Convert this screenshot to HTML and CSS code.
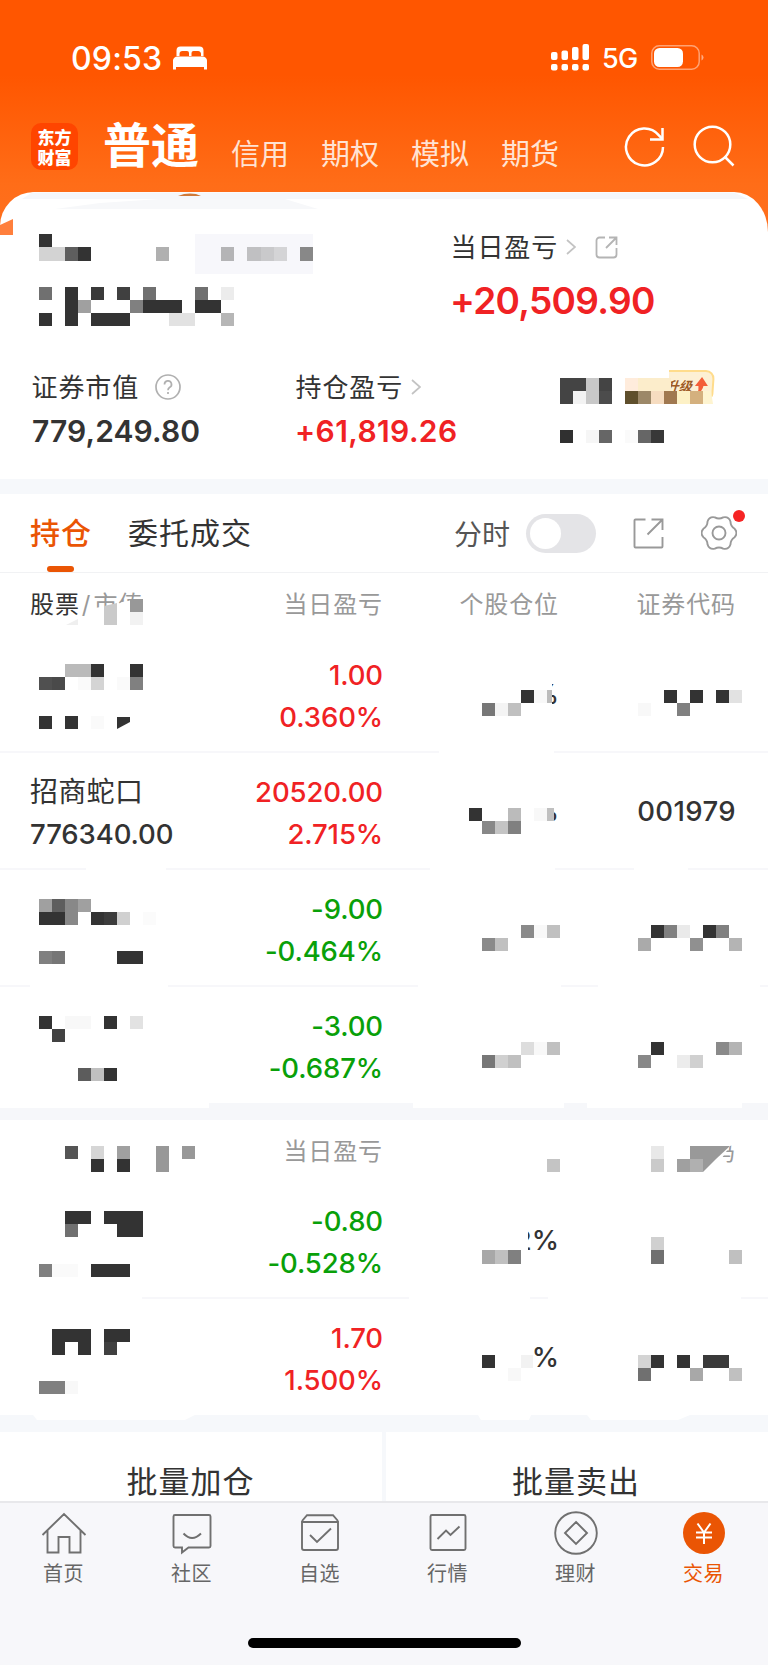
FILE: index.html
```html
<!DOCTYPE html>
<html lang="zh-CN">
<head>
<meta charset="utf-8">
<title>交易</title>
<link rel="stylesheet" href="styles.css">
</head>
<body>
<div class="screen">
  <div class="status">
    <div class="status-left"><span class="time">09:53</span>
      <svg class="bed" width="34" height="24" viewBox="0 0 34 24" fill="#fff"><path d="M3.500 10V4.500a4 4 0 0 1 4-4h19a4 4 0 0 1 4 4V10h-2.500V8.500a3 3 0 0 0-3-3.500h-4.500a2 2 0 0 0-2 2v3h-2.500V7a2 2 0 0 0-2-2H9.500a3 3 0 0 0-3 3v2z"/><path d="M0 23.500V14.500a4.500 4 0 0 1 4.500-4h25a4.500 4 0 0 1 4.500 4v9h-3V21H3v2.500z"/></svg>
    </div>
    <div class="status-right">
      <svg width="39" height="28" viewBox="0 0 39 28" fill="#fff"><rect x="0" y="8" width="6.500" height="8" rx="2"/><rect x="10.500" y="6.500" width="6.500" height="9.500" rx="2"/><rect x="21" y="3" width="6.500" height="13" rx="2"/><rect x="31.500" y="0" width="6.500" height="16" rx="2"/><rect x="0" y="20" width="6.500" height="6.500" rx="2"/><rect x="10.500" y="20" width="6.500" height="6.500" rx="2"/><rect x="21" y="20" width="6.500" height="6.500" rx="2"/><rect x="31.500" y="20" width="6.500" height="6.500" rx="2"/></svg>
      <span class="net">5G</span>
      <svg class="battery" width="54" height="26" viewBox="0 0 54 26"><rect x=".8" y=".8" width="47.400" height="23.400" rx="7.500" fill="none" stroke="#fff" stroke-opacity=".45" stroke-width="1.500"/><rect x="3" y="3" width="29" height="19" rx="5.500" fill="#fff"/><path d="M50.500 9.500q2 1 2 3t-2 3z" fill="#fff" fill-opacity=".5"/></svg>
    </div>
  </div>

  <header class="nav">
    <div class="logo">东方<br>财富</div>
    <b class="nav-main">普通</b>
    <nav class="nav-tabs"><span>信用</span><span>期权</span><span>模拟</span><span>期货</span></nav>
    <div class="nav-icons">
      <svg width="42" height="44" viewBox="0 0 42 44" fill="none" stroke="#fff" stroke-width="2.500"><path d="M39 22a18.500 18.500 0 1 1-4.300-11.900l3.300 3.500"/><path d="M38.500 3v11.500H26"/></svg>
      <svg width="42" height="44" viewBox="0 0 42 44" fill="none" stroke="#fff" stroke-width="2.500"><circle cx="19.500" cy="19.500" r="17.800"/><path d="M31.500 31.500l9 9"/></svg>
    </div>
  </header>

  <section class="summary">
    <div class="summary-top">
      <div class="metric">
        <div class="label"><span>当日盈亏</span>
          <svg class="chev" width="10" height="16" viewBox="0 0 10 16" fill="none" stroke="#c3c3c3" stroke-width="1.700"><path d="M1 1l8 7-8 7"/></svg>
          <svg class="share" width="23" height="23" viewBox="0 0 23 23" fill="none" stroke="#b4b4b4" stroke-width="1.800"><path d="M10 1.500H4.500a3 3 0 0 0-3 3v14a3 3 0 0 0 3 3h14a3 3 0 0 0 3-3V12M14 1.500h7.500V9M21.500 1.500L11 12"/></svg>
        </div>
        <div class="value big red">+20,509.90</div>
      </div>
    </div>
    <div class="summary-bottom">
      <div class="metric">
        <div class="label"><span>证券市值</span>
          <svg class="help" width="26" height="26" viewBox="0 0 26 26" fill="none" stroke="#b0b0b0" stroke-width="1.700"><circle cx="13" cy="13" r="12"/><path d="M9.500 10.500a3.500 3.500 0 1 1 5 3c-1 .7-1.500 1.200-1.500 2.700M13 18v2"/></svg>
        </div>
        <div class="value">779,249.80</div>
      </div>
      <div class="metric">
        <div class="label"><span>持仓盈亏</span>
          <svg class="chev" width="10" height="16" viewBox="0 0 10 16" fill="none" stroke="#c3c3c3" stroke-width="1.700"><path d="M1 1l8 7-8 7"/></svg>
        </div>
        <div class="value red gain">+61,819.26</div>
      </div>
      <div class="badge"><span>升级</span>
        <svg width="14" height="17" viewBox="0 0 14 17"><path d="M7.500 0L14 9H9.500Q9 14 3.500 17 5.500 13 4.500 9H1z" fill="#f45e38"/></svg>
      </div>
    </div>
  </section>

  <section class="toolbar">
    <div class="tab active">持仓</div>
    <div class="tab">委托成交</div>
    <div class="tools">
      <span class="minute">分时</span>
      <span class="switch"></span>
      <svg class="open" width="31" height="31" viewBox="0 0 31 31" fill="none" stroke="#999" stroke-width="1.900"><path d="M12.500 1.500h-10a1 1 0 0 0-1 1v26a1 1 0 0 0 1 1h26a1 1 0 0 0 1-1V19M18.500 1.500h11V12M29.500 1.500L14.500 16.500"/></svg>
      <span class="gear">
        <svg width="36" height="36" viewBox="0 0 36 36" fill="none" stroke="#999" stroke-width="1.900" stroke-linejoin="round"><circle cx="18" cy="18" r="6.500"/><path d="M33.650 13.810Q37.350 18 33.650 22.190Q29.560 24.680 29.460 29.460Q27.680 34.760 22.190 33.650Q18 31.350 13.810 33.650Q8.320 34.760 6.540 29.460Q6.440 24.680 2.350 22.190Q-1.350 18 2.350 13.810Q6.440 11.320 6.540 6.540Q8.320 1.240 13.810 2.350Q18 4.650 22.190 2.350Q27.680 1.240 29.460 6.540Q29.560 11.320 33.650 13.810Z"/></svg>
        <i class="dot"></i>
      </span>
    </div>
  </section>

  <section class="table">
    <div class="row head"><div class="name"><span class="dark">股票</span><span class="slash">/</span>市值</div><div>当日盈亏</div><div>个股仓位</div><div>证券代码</div></div>
    <div class="row"><div class="name"></div><div class="pair red">1.00<br>0.360%</div><div class="plain">%</div><div></div></div>
    <div class="row"><div class="name pair"><span class="stock">招商蛇口</span><br>776340.00</div><div class="pair red">20520.00<br>2.715%</div><div class="plain">%</div><div class="plain code">001979</div></div>
    <div class="row"><div class="name"></div><div class="pair green">-9.00<br>-0.464%</div><div></div><div></div></div>
    <div class="row last"><div class="name"></div><div class="pair green">-3.00<br>-0.687%</div><div></div><div></div></div>
  </section>

  <section class="table second">
    <div class="row head"><div class="name"></div><div>当日盈亏</div><div></div><div>码</div></div>
    <div class="row"><div class="name"></div><div class="pair green">-0.80<br>-0.528%</div><div class="plain">2%</div><div></div></div>
    <div class="row last"><div class="name"></div><div class="pair red">1.70<br>1.500%</div><div class="plain">%</div><div></div></div>
  </section>

  <section class="actions"><div>批量加仓</div><div>批量卖出</div></section>

  <footer class="tabbar">
    <div class="items">
      <div class="item"><svg width="46" height="46" viewBox="0 0 46 46"><path d="M1.500 24L23 3l21.500 21M6.500 19.500V41.500H17.500V26H28.500V41.500H39.500V19.500"/></svg>首页</div>
      <div class="item"><svg width="46" height="46" viewBox="0 0 46 46"><path d="M6 4H40a1.500 1.500 0 0 1 1.500 1.500V35a1.500 1.500 0 0 1-1.500 1.500H19.500L13 41.500V36.500H6A1.500 1.500 0 0 1 4.500 35V5.500A1.500 1.500 0 0 1 6 4zM14.500 22.500q8.500 9 17.500 0"/></svg>社区</div>
      <div class="item"><svg width="46" height="46" viewBox="0 0 46 46"><path d="M5 10L10 4.200H36L41 10M5 10V37a2 2 0 0 0 2 2H39a2 2 0 0 0 2-2V10M5 11H41M13 24l7 7L34 17.500"/></svg>自选</div>
      <div class="item"><svg width="46" height="46" viewBox="0 0 46 46"><rect x="5.500" y="4" width="35" height="35" rx="1.500"/><path d="M12.500 28l8.500-8.500 4.500 4.500 9-8.500"/></svg>行情</div>
      <div class="item"><svg width="46" height="46" viewBox="0 0 46 46"><circle cx="23" cy="22" r="20.800"/><path d="M23 11L34 22 23 33 12 22z"/></svg>理财</div>
      <div class="item on"><svg width="46" height="46" viewBox="0 0 46 46"><circle class="disc" cx="23" cy="22" r="21"/><path class="yen" d="M16.500 12.500l6.500 9 6.500-9M15 21.500H31M15 26.500H31M23 21.500V33"/></svg>交易</div>
    </div>
    <div class="home"></div>
  </footer>

  <svg class="mosaic" id="mosaic" width="768" height="1665" viewBox="0 0 768 1665" aria-hidden="true"></svg>
</div>
<script src="mosaic.js"></script>
</body>
</html>
```
FILE: styles.css
```css
* { box-sizing: border-box; }
body { margin: 0; font-family: Inter, "Noto Sans CJK SC", sans-serif; color: #333; background: #fff; }
svg { display: block; flex: none; }
.screen { position: relative; width: 768px; height: 1665px; overflow: hidden; background: linear-gradient(#ff5600 0, #ff5600 75px, #ff6d18 185px, #ff7020 240px); display: flex; flex-direction: column; }
.mosaic { position: absolute; left: 0; top: 0; pointer-events: none; }
.red { color: #f02224; }
.green { color: #09a009; }

.status { height: 112px; padding: 38px 63px 0 71px; display: flex; justify-content: space-between; color: #fff; }
.status-left, .status-right { display: flex; height: 40px; align-items: center; }
.time { font-size: 32px; font-weight: 550; letter-spacing: 0.2px; width: 102px; }
.net { font-size: 27px; font-weight: 500; width: 61px; padding-left: 12px; letter-spacing: -0.8px; }

.nav { height: 80px; padding-left: 31px; display: flex; align-items: flex-start; color: #fff; }
.logo { width: 47px; height: 47px; margin-top: 11px; border-radius: 10px; background: #ff4500; font: 900 17px/19.500px "Noto Sans CJK SC", sans-serif; text-align: center; padding-top: 4px; }
.nav-main { font-size: 48px; line-height: 68px; font-weight: 600; margin-left: 25px; width: 128px; white-space: nowrap; }
.nav-tabs { display: flex; gap: 32px; width: 393px; font-size: 29px; line-height: 42px; padding-top: 22px; color: #ffe3d3; white-space: nowrap; }
.nav-icons { display: flex; gap: 27px; padding-top: 13px; }

.summary { height: 287px; background: #fff; border-radius: 34px 34px 0 0 / 34px 40px 0 0; padding: 34px 32px 0; }
.summary-top { height: 140px; padding-left: 419px; }
.summary-bottom { display: grid; grid-template-columns: 264px 374px auto; position: relative; }
.label { display: flex; align-items: center; font-size: 26px; letter-spacing: 0.9px; height: 42px; white-space: nowrap; }
.label span { margin: -4px 0 0 -0.500px; }
.label .chev { margin-left: 8px; }
.label .share { margin-left: 19px; }
.label .help { margin-left: 16px; }
.value { font-size: 30px; line-height: 46px; font-weight: 600; letter-spacing: 0.1px; white-space: nowrap; }
.value.big { font-size: 37px; line-height: 65px; letter-spacing: -0.7px; margin-left: -1px; }
.value.gain { letter-spacing: 0.4px; margin-left: -1px; }
.badge { position: absolute; left: 620px; top: 4px; width: 62px; height: 30px; border: 2px solid #ffdc8c; border-radius: 6px 9px 6px 6px; background: #fdf0d4; display: flex; align-items: center; justify-content: flex-end; padding-right: 4px; gap: 2px; transform: skewX(-4deg); color: #9d5a26; font-size: 13px; font-weight: 700; font-style: italic; }

.toolbar { height: 94px; border-top: 15px solid #f6f8fb; background: #fff; display: flex; padding: 0 30px; position: relative; flex: none; border-bottom: 1px solid #f1f2f4; }
.tab { font-size: 30px; letter-spacing: 1px; line-height: 79px; height: 78px; margin-right: 36px; white-space: nowrap; position: relative; }
.tab.active { color: #ea5504; font-weight: 500; }
.tab.active::after { content: ""; position: absolute; left: 17px; bottom: 0; width: 27px; height: 6px; border-radius: 3px; background: #ea5504; }
.tools { margin-left: auto; display: flex; align-items: center; color: #555; }
.minute { font-size: 28px; width: 72px; }
.switch { width: 70px; height: 39px; border-radius: 20px; background: #e4e4e7; padding: 4px; margin-right: 37px; }
.switch::before { content: ""; display: block; width: 31px; height: 31px; border-radius: 50%; background: #fff; }
.open { margin-right: 37px; }
.gear { position: relative; margin-right: 1px; }
.dot { position: absolute; right: -8px; top: -5px; width: 12px; height: 12px; border-radius: 50%; background: #f62424; }

.table { background: #fff; flex: none; }
.table.second { border-top: 17px solid #f6f7fa; }
.row { height: 117px; display: grid; grid-template-columns: 208px 145px 176px 177px; padding: 0 30px; align-items: center; text-align: right; font-size: 27.500px; line-height: 42px; font-weight: 550; letter-spacing: -0.1px; border-bottom: 2px solid #f7f7fa; white-space: nowrap; }
.row .name { text-align: left; }
.row .pair { padding-top: 4px; }
.row .plain { font-weight: 500; letter-spacing: 0; }
.row .code { letter-spacing: 0.4px; }
.row.last { border-bottom: 0; height: 116px; padding-bottom: 1px; }
.row.head { height: 63px; border: 0; font-size: 24px; font-weight: 400; letter-spacing: 0.9px; color: #999; }
.second .row.head { height: 62px; padding-top: 2px; }
.dark { color: #333; }
.slash { margin: 0 2px; }
.stock { font-weight: 400; font-size: 28px; letter-spacing: 0.3px; }

.actions { flex: none; height: 86px; border-top: 17px solid #f6f8fb; background: #fff; display: grid; grid-template-columns: 382px 386px; font-size: 31px; letter-spacing: 1px; line-height: 100px; text-align: center; overflow: hidden; }
.actions div { margin-left: -1px; }
.actions div + div { margin: 0; padding-right: 2px; border-left: 4px solid #f6f8fb; }

.tabbar { flex: 1; background: #f7f7fa; border-top: 2px solid #e8e8eb; position: relative; }
.items { display: grid; grid-template-columns: repeat(6, 128px); padding-top: 8px; }
.item { display: flex; flex-direction: column; align-items: center; padding-right: 1px; font-size: 20px; line-height: 30px; letter-spacing: 0.6px; color: #666; }
.item svg { fill: none; stroke: #707070; stroke-width: 1.900px; margin-bottom: 2px; }
.item.on { color: #ea5504; }
.item .disc { fill: #ea5504; stroke: none; }
.item .yen { stroke: #fff; stroke-width: 2px; }
.home { width: 273px; height: 10px; border-radius: 5px; background: #000; margin: 49px 0 0 248px; }
```
FILE: mosaic.js
```js
// Privacy mosaic: white patches, then square cells on a fixed grid.
const CELL = 13.026;
const D = '#333';
const patches = [
  [439, 750, 115, 5], [86, 866, 80, 6], [430, 866, 125, 6], [634, 866, 54, 6],
  [30, 983, 138, 6], [418, 983, 143, 6], [598, 983, 162, 6],
  [0, 1295, 142, 6], [409, 1295, 121, 6], [548, 1295, 193, 6],
  [0, 1100, 209, 8], [413, 1100, 151, 8], [587, 1100, 155, 8],
  [528, 680, 24, 30], [528, 795, 26, 30], [505, 1225, 23, 32],
  [620, 365, 49, 13]
];
const polys = [
  ['#f5f7fa', '32,192.500 734,192.500 748,199 22,199'],
  ['#f7f8fa', '55,209 100,203 160,199 285,199 318,209'],
  ['#cf7a3a', '178,196 184,194 190,193.500 196,194 201,196'],
  ['#ff7f3c', '0,225 13,219 13,235 0,235'],
  ['#fff', '95,608 118,604 122,602 139,599 142,626 95,626'],
  ['#efefef', '66,625 78,619 78,625'],
  ['#cacaca', '104,606 117,603 117,625 104,625'],
  ['#fff', '700,1132 737,1132 737,1144 730,1146 722,1158 717,1168 700,1172'],
  ['#999', '690,1146 730,1146 716,1159 690,1159'],
  ['#999', '703,1159 716,1159 703,1172'],
  [D, '117,717 130,717 130,722 117,729'],
  ['#fcedcb', '638,378 671,378 671,391 638,391'],
  ['#fef4d0', '703,391 711,391 713,404 703,404'],
  ['#fff', '33,1415 195,1415 185,1420 37,1420'],
  ['#fff', '478,1415 531,1415 529,1420 481,1420'],
  ['#fff', '587,1415 690,1415 678,1420 591,1420']
];
// row: [column, width, colour, height = 1]
const cells = {
  18: [[15, 9, '#f7f7fb', 3], [3, 1, D]],
  19: [[3, 2, '#d3d3d3'], [5, 1, '#5e5e5e'], [6, 1, D], [12, 1, '#b0b0b0'], [17, 1, '#b4b4b6'], [19, 1, '#c0c0c2'], [20, 1, '#c9c9cb'], [21, 1, '#d4d4d6'], [23, 1, '#888']],
  22: [[3, 1, '#707070'], [5, 1, D, 3], [7, 1, '#3a3a3a'], [9, 1, '#404040'], [11, 1, '#707070'], [15, 1, '#707070'], [17, 1, '#ececec']],
  23: [[6, 1, '#a0a0a0'], [10, 1, '#808080'], [11, 3, D], [15, 2, D]],
  24: [[3, 1, D], [7, 3, D], [13, 2, '#e2e2e2'], [17, 1, '#b6b6b6']],
  29: [[43, 2, '#444'], [45, 1, '#c8c8c8', 2], [46, 1, '#444'], [48, 1, '#ffecdc']],
  30: [[43, 1, '#444'], [44, 1, '#f3f3f3'], [46, 1, '#4c4c4c'], [48, 1, '#5f4f2c'], [49, 1, '#9c8868'], [50, 1, '#f6dcc0'], [51, 1, '#a07850'], [52, 1, '#fdf1c6'], [53, 1, '#d4b07e']],
  33: [[43, 1, '#303030'], [45, 1, '#f6f6f6'], [46, 1, '#666'], [48, 1, '#fafafa'], [49, 1, '#666'], [50, 1, '#383838']],
  46: [[10, 1, '#989898']],
  47: [[10, 1, '#f2f2f2']],
  51: [[5, 2, '#bababa'], [7, 1, D], [10, 1, D]],
  52: [[3, 1, '#505050'], [4, 1, '#4a4a4a'], [6, 1, '#fafafa'], [7, 1, '#d4d4d4'], [9, 1, '#fafafa'], [10, 1, '#808080']],
  53: [[40, 1, D], [41, 1, '#f8f8f8'], [42, 0.4, '#bbb'], [51, 1, D], [53, 1, D], [55, 1, D], [56, 1, '#e2e2e2']],
  54: [[37, 1, '#777'], [38, 1, '#f4f4f4'], [39, 1, '#c0c0c0'], [49, 1, '#f8f8f8'], [52, 1, '#808080']],
  55: [[3, 1, D], [5, 1, D], [7, 1, '#fafafa']],
  62: [[36, 1, D], [39, 1, '#bbb'], [41, 1, '#f8f8f8'], [42, 0.5, '#c0c0c0']],
  63: [[37, 1, '#888'], [38, 1, '#c4c4c4'], [39, 1, '#808080']],
  69: [[3, 1, '#a0a0a0'], [4, 1, '#5e5e5e'], [5, 1, '#888', 2], [6, 1, '#a0a0a0']],
  70: [[3, 2, D], [7, 1, D], [8, 1, '#3c3c3c'], [9, 1, '#d0d0d0'], [11, 1, '#fbfbfb']],
  71: [[40, 1, '#8a8a8a'], [41, 1, '#f8f8f8'], [42, 1, '#c0c0c0'], [50, 1, D], [51, 1, '#808080'], [52, 1, '#eaeaea'], [54, 1, D], [55, 1, '#808080']],
  72: [[37, 1, '#8a8a8a'], [38, 1, '#c0c0c0'], [49, 1, '#aaa'], [53, 1, '#909090'], [56, 1, '#b4b4b4']],
  73: [[3, 1, '#808080'], [4, 1, '#767676'], [9, 2, D]],
  78: [[3, 1, D], [5, 2, '#f8f8f8'], [8, 1, D], [10, 1, '#e2e2e2']],
  79: [[4, 1, '#424242']],
  80: [[40, 1, '#ddd'], [41, 1, '#f8f8f8'], [42, 1, '#c0c0c0'], [50, 1, D], [55, 1, '#8a8a8a'], [56, 1, '#b4b4b4']],
  81: [[37, 1, '#777'], [38, 1, '#d0d0d0'], [39, 1, '#c0c0c0'], [49, 1, '#888'], [52, 1, '#ececec'], [53, 1, '#d0d0d0']],
  82: [[6, 1, '#5c5c5c'], [7, 1, '#c0c0c0'], [8, 1, D]],
  88: [[5, 1, '#555'], [7, 1, '#d6d6d6'], [9, 1, '#a0a0a0'], [12, 1, '#989898', 2], [14, 1, '#989898'], [50, 1, '#e8e8e8']],
  89: [[7, 1, D], [9, 1, D], [42, 1, '#c4c4c4'], [50, 1, '#cacaca'], [52, 1, '#a0a0a0'], [53, 1, '#b0b0b0']],
  93: [[5, 2, D], [8, 3, D]],
  94: [[5, 1, '#707070'], [9, 2, D]],
  95: [[50, 1, '#d0d0d0']],
  96: [[37, 1, '#a8a8a8'], [38, 1, '#c0c0c0'], [39, 1, '#808080'], [50, 1, '#707070'], [56, 1, '#c0c0c0']],
  97: [[3, 1, '#808080'], [4, 2, '#fafafa'], [7, 3, D]],
  102: [[4, 3, D], [8, 2, D]],
  103: [[4, 1, D], [6, 1, D], [8, 1, '#404040']],
  104: [[37, 1, D], [40, 0.9, '#f2f2f2'], [49, 1, '#d4d4d4'], [50, 1, D], [52, 1, D], [54, 2, '#3a3a3a']],
  105: [[39, 1, '#f8f8f8'], [49, 1, '#707070'], [53, 1, '#a8a8a8'], [56, 1, '#c0c0c0']],
  106: [[3, 2, '#808080'], [5, 1, '#f8f8f8']]
};
const px = n => Math.round(n * CELL);
const rect = (x, y, w, h, c) => `<rect x="${x}" y="${y}" width="${w}" height="${h}" fill="${c}"/>`;
let out = patches.map(p => rect(...p, '#fff')).join('');
out += polys.map(([c, p]) => `<polygon fill="${c}" points="${p}"/>`).join('');
for (const [row, list] of Object.entries(cells)) {
  const r = +row;
  for (const [c, w, color, h = 1] of list) {
    out += rect(px(c), px(r), px(c + w) - px(c), px(r + h) - px(r), color);
  }
}
document.getElementById('mosaic').innerHTML = out;
```
